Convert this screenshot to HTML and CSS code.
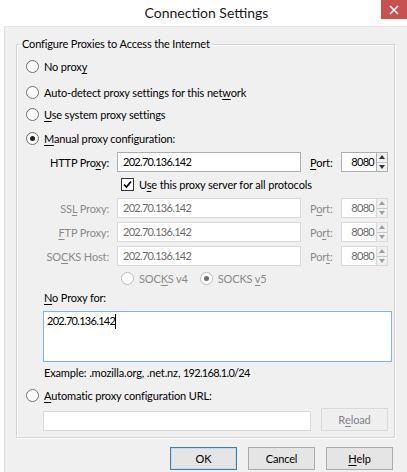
FILE: index.html
```html
<!DOCTYPE html>
<html>
<head>
<meta charset="utf-8">
<link rel="stylesheet" href="styles.css">
</head>
<body>
<div class="window">
  <div class="titlebar">
    <div class="title">Connection Settings</div>
    <div class="close"><svg width="10" height="10" viewBox="0 0 10 10"><path d="M1 1L9 9M9 1L1 9" stroke="#fff" stroke-width="1.6"/></svg></div>
  </div>
  <div class="client">
    <fieldset class="group">
      <legend>Configure Proxies to Access the Internet</legend>
      <div class="opt r-no"><span class="radio"></span><span>No prox<u>y</u></span></div>
      <div class="opt r-auto"><span class="radio"></span><span>Auto-detect proxy settings for this net<u>w</u>ork</span></div>
      <div class="opt r-sys"><span class="radio"></span><span><u>U</u>se system proxy settings</span></div>
      <div class="opt r-man"><span class="radio on"></span><span><u>M</u>anual proxy configuration:</span></div>

      <div class="prow http">
        <label class="plabel">HTTP Pro<u>x</u>y:</label>
        <div class="field num">202.70.136.142</div>
        <label class="portlabel"><u>P</u>ort:</label>
        <div class="port"><div class="portval num">8080</div><div class="spin"><span class="up"></span><span class="down"></span></div></div>
      </div>
      <div class="allproto"><span class="check"><svg width="9" height="9" viewBox="0 0 9 9"><path d="M1 4.5L3.5 7L8 1.5" fill="none" stroke="#000" stroke-width="1.7"/></svg></span><span>U<u>s</u>e this proxy server for all protocols</span></div>
      <div class="prow dis">
        <label class="plabel">SS<u>L</u> Proxy:</label>
        <div class="field num">202.70.136.142</div>
        <label class="portlabel">P<u>o</u>rt:</label>
        <div class="port"><div class="portval num">8080</div><div class="spin"><span class="up"></span><span class="down"></span></div></div>
      </div>
      <div class="prow dis">
        <label class="plabel"><u>F</u>TP Proxy:</label>
        <div class="field num">202.70.136.142</div>
        <label class="portlabel">Po<u>r</u>t:</label>
        <div class="port"><div class="portval num">8080</div><div class="spin"><span class="up"></span><span class="down"></span></div></div>
      </div>
      <div class="prow dis">
        <label class="plabel">SO<u>C</u>KS Host:</label>
        <div class="field num">202.70.136.142</div>
        <label class="portlabel">Por<u>t</u>:</label>
        <div class="port"><div class="portval num">8080</div><div class="spin"><span class="up"></span><span class="down"></span></div></div>
      </div>
      <div class="socks">
        <span class="sopt"><span class="radio dis"></span><span>SOC<u>K</u>S v4</span></span>
        <span class="sopt"><span class="radio dis on"></span><span>SOCKS <u>v</u>5</span></span>
      </div>
      <div class="noproxy-label"><u>N</u>o Proxy for:</div>
      <div class="noproxy"><span class="num">202.70.136.142</span><span class="caret"></span></div>
      <div class="example">Example: .mozilla.org, .net.nz, <span class="num">192.168.1.0/24</span></div>
      <div class="opt r-pac"><span class="radio"></span><span><u>A</u>utomatic proxy configuration URL:</span></div>
      <div class="pacrow">
        <div class="pacfield"></div>
        <div class="btn reload">R<u>e</u>load</div>
      </div>
    </fieldset>
    <div class="buttons">
      <div class="btn default">OK</div>
      <div class="btn">Cancel</div>
      <div class="btn"><u>H</u>elp</div>
    </div>
  </div>
</div>
</body>
</html>
```
FILE: styles.css
```css
html, body {
  margin: 0;
  padding: 0;
  background: #fff;
}
body {
  font-family: Lato, "Noto Sans", sans-serif;
  font-size: 11px;
  letter-spacing: -0.15px;
  color: #000;
}
.num { letter-spacing: -0.7px; }
u { text-decoration: underline; text-underline-offset: 2px; text-decoration-thickness: 1px; }
.window {
  width: 407px;
  height: 472px;
  overflow: hidden;
  display: flex;
  flex-direction: column;
}
.titlebar {
  height: 26px;
  position: relative;
  display: flex;
  justify-content: center;
  align-items: center;
  background: #fff;
}
.title {
  font-size: 14px;
  letter-spacing: 0;
  color: #1a1a1a;
  padding-left: 6px;
  margin-top: -2px;
}
.close {
  position: absolute;
  top: 0;
  right: 0;
  width: 26px;
  height: 19px;
  background: #c75050;
  display: flex;
  align-items: center;
  justify-content: center;
}
.client {
  flex: 1;
  margin-left: 4px;
  border-left: 1px solid #dcdcdc;
  border-top: 1px solid #e6e6e6;
  background: #f0f0f0;
  display: flex;
  flex-direction: column;
}
.group {
  margin: 9px 12px 0 11px;
  padding: 0 0 6px 0;
  border: 1px solid #d5d5d5;
  box-shadow: inset 1px 1px 0 #fff, 1px 1px 0 #fff;
  min-width: 0;
  display: flex;
  flex-direction: column;
}
.group legend {
  padding: 0 2px;
  margin-left: 3px;
  line-height: 16px;
}
.opt {
  display: flex;
  align-items: center;
  height: 20px;
  padding-left: 9px;
  gap: 5px;
}
.r-no { margin-top: 4px; }
.r-auto { margin-top: 6px; }
.r-sys { margin-top: 2px; }
.r-man { margin-top: 4px; }
.radio {
  width: 11px;
  height: 11px;
  border: 1px solid #707070;
  border-radius: 50%;
  background: #fff;
  display: inline-flex;
  align-items: center;
  justify-content: center;
  flex: none;
}
.radio.on::after {
  content: "";
  width: 5px;
  height: 5px;
  border-radius: 50%;
  background: #222;
}
.radio.dis { border-color: #bcbcbc; }
.radio.dis.on::after { background: #6d6d6d; }

.prow {
  display: grid;
  grid-template-columns: 92px 184px 24px 47px;
  column-gap: 8px;
  align-items: center;
  height: 20px;
  margin-top: 4px;
}
.prow .portlabel { margin-left: 1px; }
.plabel { text-align: right; }
.field {
  height: 18px;
  border: 1px solid #abadb3;
  background: #fff;
  padding-left: 5px;
  line-height: 18px;
}
.port {
  display: flex;
  height: 20px;
}
.portval {
  flex: 1;
  border: 1px solid #abadb3;
  border-right: none;
  background: #fff;
  text-align: right;
  padding-right: 2px;
  line-height: 18px;
}
.spin {
  width: 10px;
  display: flex;
  flex-direction: column;
  border: 1px solid #abadb3;
  background: #f0f0f0;
}
.spin span {
  flex: 1;
  display: flex;
  align-items: center;
  justify-content: center;
}
.spin .up { border-bottom: 1px solid #c9c9c9; }
.spin .up::after {
  content: "";
  border-left: 3px solid transparent;
  border-right: 3px solid transparent;
  border-bottom: 4px solid #333;
}
.spin .down::after {
  content: "";
  border-left: 3px solid transparent;
  border-right: 3px solid transparent;
  border-top: 4px solid #333;
}
.dis .plabel, .dis .portlabel { color: #8a8a8a; }
.dis .field, .dis .portval { border-color: #d9d9d9; color: #6d6d6d; }
.dis .spin { border-color: #d9d9d9; }
.dis .spin .up::after { border-bottom-color: #a0a0a0; }
.dis .spin .down::after { border-top-color: #a0a0a0; }

.allproto {
  display: flex;
  align-items: center;
  gap: 5px;
  height: 20px;
  margin-top: 2px;
  padding-left: 104px;
}
.check {
  width: 11px;
  height: 11px;
  border: 1px solid #333;
  background: #fff;
  display: flex;
  align-items: center;
  justify-content: center;
}
.socks {
  display: flex;
  height: 20px;
  margin-top: 2px;
  padding-left: 104px;
  gap: 12px;
  color: #8a8a8a;
}
.sopt { display: flex; align-items: center; gap: 5px; }
.noproxy-label {
  margin-top: 2px;
  padding-left: 27px;
  line-height: 16px;
}
.noproxy {
  margin: 5px 0 0 26px;
  width: 344px;
  height: 49px;
  border: 1px solid #7eb4ea;
  background: #fff;
  padding-left: 3px;
  line-height: 18px;
  display: flex;
  align-items: flex-start;
}
.caret {
  width: 1px;
  height: 15px;
  background: #000;
  margin-top: 2px;
}
.example {
  margin-top: 3px;
  padding-left: 27px;
  line-height: 16px;
}
.r-pac { margin-top: 4px; }
.pacrow {
  display: flex;
  align-items: flex-end;
  margin-top: 3px;
  padding-left: 26px;
  gap: 10px;
}
.pacfield {
  width: 266px;
  height: 18px;
  border: 1px solid #d9d9d9;
  background: #fff;
}
.btn {
  box-sizing: border-box;
  width: 67px;
  height: 23px;
  border: 1px solid #acacac;
  background: #e5e5e5;
  display: flex;
  align-items: center;
  justify-content: center;
}
.btn.reload {
  height: 23px;
  color: #838383;
  border-color: #d9d9d9;
  background: #efefef;
}
.btn.default { border-color: #3c7fb1; box-shadow: inset 0 0 0 1px #c2dcf0; }
.buttons {
  display: flex;
  justify-content: flex-end;
  gap: 11px;
  margin: 9px 14px 0 0;
}
```
